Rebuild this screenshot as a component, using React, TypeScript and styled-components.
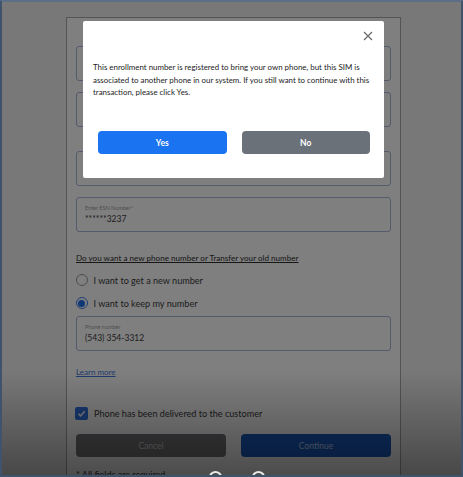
import React from 'react'
import styled, { createGlobalStyle } from 'styled-components'

const GlobalStyle = createGlobalStyle`
  html, body {
    margin: 0;
    padding: 0;
    background: #2f4560;
  }
  * {
    box-sizing: border-box;
  }
`

const Frame = styled.div`
  position: relative;
  width: 463px;
  height: 477px;
  overflow: hidden;
  border: 2px solid #3f536d;
  border-top-color: #5d6f86;
  background: #f1f1f1;
  font-family: Lato, 'Liberation Sans', sans-serif;
  color: #3a3a3a;
`

const Card = styled.div`
  width: 335px;
  margin: 15px 0 0 64px;
  padding: 28px 9px 20px;
  background: #ffffff;
  border: 1px solid #a8a8a8;
  display: flex;
  flex-direction: column;
`

const Field = styled.div<{ $mt?: number }>`
  height: 35px;
  margin-top: ${(p) => p.$mt ?? 0}px;
  border: 1px solid #a9b6d8;
  border-radius: 3px;
  padding: 6px 8px 0;
  display: flex;
  flex-direction: column;
  justify-content: flex-start;
`

const FieldLabel = styled.span`
  font-size: 5.5px;
  color: #a0a0a0;
  line-height: 8px;
`

const FieldValue = styled.span`
  font-size: 8.5px;
  color: #3a3a3a;
  line-height: 14px;
`

const Question = styled.span`
  margin-top: 21px;
  font-size: 8.1px;
  color: #2c2c2c;
  text-decoration: underline;
  line-height: 10px;
`

const OptionRow = styled.label<{ $mt: number }>`
  display: flex;
  align-items: center;
  gap: 6px;
  margin-top: ${(p) => p.$mt}px;
  height: 14px;
  font-size: 9.1px;
  color: #3a3a3a;
`

const Radio = styled.span<{ $on?: boolean }>`
  width: 12px;
  height: 12px;
  border-radius: 50%;
  border: 1px solid ${(p) => (p.$on ? '#3a79e6' : '#9a9a9a')};
  background: #fff;
  display: flex;
  align-items: center;
  justify-content: center;
  margin-left: -0.5px;
  &::after {
    content: '';
    width: 7px;
    height: 7px;
    border-radius: 50%;
    background: ${(p) => (p.$on ? '#1f6fe8' : 'transparent')};
  }
`

const Check = styled.span`
  width: 13px;
  height: 13px;
  border-radius: 2px;
  background: #2f73e6;
  display: flex;
  align-items: center;
  justify-content: center;
  margin-left: -1px;
`

const LearnMore = styled.a`
  margin-top: 16px;
  font-size: 8px;
  color: #3d78d8;
  text-decoration: underline;
  line-height: 10px;
`

const ButtonRow = styled.div`
  display: flex;
  gap: 15px;
  margin-top: 14px;
`

const FormButton = styled.button<{ $primary?: boolean }>`
  flex: 1;
  height: 23px;
  border: none;
  border-radius: 4px;
  font-family: inherit;
  font-size: 8.5px;
  background: ${(p) => (p.$primary ? '#1a5cc4' : '#76767a')};
  color: ${(p) => (p.$primary ? '#bcd4fa' : '#cfcfcf')};
`

const Required = styled.span`
  margin-top: 12px;
  font-size: 9px;
  line-height: 12px;
  color: #3a3a3a;
`

const Overlay = styled.div`
  position: absolute;
  inset: 0;
  background: linear-gradient(
    to bottom,
    rgba(0, 0, 0, 0.5) 0%,
    rgba(0, 0, 0, 0.5) 78%,
    rgba(0, 0, 0, 0.7) 100%
  );
`

const Modal = styled.div`
  position: absolute;
  left: 81px;
  top: 19px;
  width: 301px;
  height: 157px;
  background: #fff;
  border-radius: 2px;
  padding: 40px 9px 0 10px;
  display: flex;
  flex-direction: column;
`

const Close = styled.button`
  position: absolute;
  right: 10px;
  top: 9px;
  width: 12px;
  height: 12px;
  padding: 0;
  border: none;
  background: none;
  display: flex;
  align-items: center;
  justify-content: center;
`

const Message = styled.p`
  margin: 0;
  font-size: 7.9px;
  line-height: 12.5px;
  color: #1c1c1c;
`

const ModalActions = styled.div`
  display: flex;
  gap: 15px;
  padding: 0 5px 0 5px;
  margin-top: auto;
  margin-bottom: 24px;
`

const ModalButton = styled.button<{ $primary?: boolean }>`
  flex: 1;
  height: 23px;
  border: none;
  border-radius: 4px;
  font-family: inherit;
  font-weight: 700;
  font-size: 8.5px;
  color: #fff;
  background: ${(p) => (p.$primary ? '#1a73f0' : '#6b7178')};
`

const Controls = styled.div`
  position: absolute;
  left: 207px;
  bottom: -8px;
  display: flex;
  gap: 30px;
`

const Dot = styled.span`
  width: 13px;
  height: 12px;
  border-radius: 50%;
  border: 2px solid #e8e8e8;
`

const App: React.FC = () => {
  return (
    <>
      <GlobalStyle />
      <Frame>
        <Card>
          <Field />
          <Field $mt={11} />
          <Field $mt={24} />
          <Field $mt={11}>
            <FieldLabel>Enter ESN Number*</FieldLabel>
            <FieldValue>******3237</FieldValue>
          </Field>
          <Question>Do you want a new phone number or Transfer your old number</Question>
          <OptionRow $mt={10}>
            <Radio />
            I want to get a new number
          </OptionRow>
          <OptionRow $mt={9}>
            <Radio $on />
            I want to keep my number
          </OptionRow>
          <Field $mt={6}>
            <FieldLabel>Phone number</FieldLabel>
            <FieldValue>(543) 354-3312</FieldValue>
          </Field>
          <LearnMore>Learn more</LearnMore>
          <OptionRow $mt={29}>
            <Check>
              <svg width="9" height="9" viewBox="0 0 10 10">
                <path d="M1.5 5.2 L4 7.6 L8.6 2.4" fill="none" stroke="#fff" strokeWidth="1.6" />
              </svg>
            </Check>
            Phone has been delivered to the customer
          </OptionRow>
          <ButtonRow>
            <FormButton>Cancel</FormButton>
            <FormButton $primary>Continue</FormButton>
          </ButtonRow>
          <Required>* All fields are required</Required>
        </Card>
        <Overlay />
        <Modal>
          <Close aria-label="Close">
            <svg width="10" height="10" viewBox="0 0 10 10">
              <path d="M1 1 L9 9 M9 1 L1 9" stroke="#6e6e6e" strokeWidth="1.3" />
            </svg>
          </Close>
          <Message>
            This enrollment number is registered to bring your own phone, but this SIM is
            associated to another phone in our system. If you still want to continue with this
            transaction, please click Yes.
          </Message>
          <ModalActions>
            <ModalButton $primary>Yes</ModalButton>
            <ModalButton>No</ModalButton>
          </ModalActions>
        </Modal>
        <Controls>
          <Dot />
          <Dot />
        </Controls>
      </Frame>
    </>
  )
}

export default App
